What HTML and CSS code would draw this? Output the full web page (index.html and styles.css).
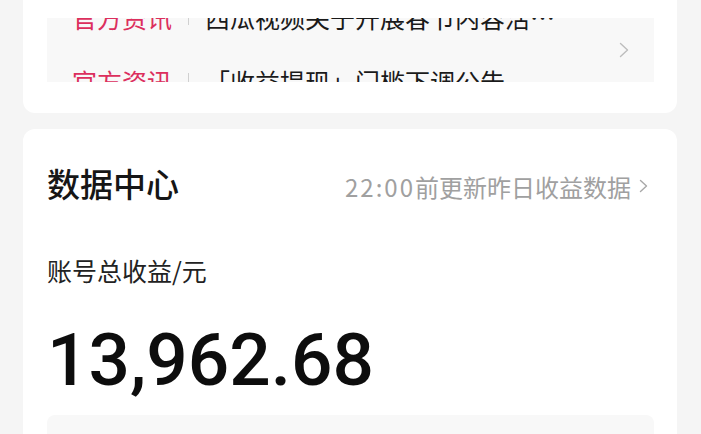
FILE: index.html
```html
<!DOCTYPE html>
<html lang="zh-CN">
<head>
    <meta charset="UTF-8">
    <meta name="viewport" content="width=device-width, initial-scale=1.0">
    <title>创作者中心</title>
    <link rel="stylesheet" href="styles.css">
</head>
<body>
    <div class="card notice-card">
        <div class="ticker">
            <div class="ticker-window">
                <ul class="ticker-list">
                    <li class="ticker-row">
                        <span class="tag">官方资讯</span>
                        <span class="sep"></span>
                        <span class="headline">西瓜视频关于开展春节内容活动的通知</span>
                    </li>
                    <li class="ticker-row">
                        <span class="tag">官方资讯</span>
                        <span class="sep"></span>
                        <span class="headline">「收益提现」门槛下调公告</span>
                    </li>
                </ul>
            </div>
            <svg class="chevron" width="10" height="16" viewBox="0 0 10 16">
                <polyline points="1.5,1.5 8.5,8 1.5,14.5" fill="none" stroke="#bdbdbd" stroke-width="1.4" stroke-linecap="round" stroke-linejoin="round"/>
            </svg>
        </div>
    </div>

    <div class="card data-card">
        <div class="data-head">
            <h2 class="data-title">数据中心</h2>
            <a class="data-update" href="#">
                <span><span class="time">22:00</span>前更新昨日收益数据</span>
                <svg width="9" height="14" viewBox="0 0 9 14">
                    <polyline points="1.5,1.5 7.5,7 1.5,12.5" fill="none" stroke="#a8a8a8" stroke-width="1.4" stroke-linecap="round" stroke-linejoin="round"/>
                </svg>
            </a>
        </div>
        <p class="total-label">账号总收益/元</p>
        <p class="total-value">13,962.68</p>
        <div class="data-panel"></div>
    </div>
</body>
</html>
```

FILE: styles.css
```css
body {
    margin: 0;
    padding: 0 24px 0 23px;
    background-color: #f5f5f5;
    font-family: "Noto Sans CJK SC", "Noto Sans", sans-serif;
    color: #161616;
}
.card {
    background-color: #ffffff;
    border-radius: 12px;
}
.notice-card {
    border-radius: 0 0 12px 12px;
    padding: 18px 23px 31px 24px;
}
.ticker {
    display: flex;
    align-items: center;
    height: 64px;
    background-color: #f8f8f8;
}
.ticker-window {
    flex: 1;
    height: 64px;
    overflow: hidden;
}
.ticker-list {
    list-style: none;
    margin: -33px 0 0 0;
    padding: 0 0 0 25px;
}
.ticker-row {
    display: flex;
    align-items: center;
    height: 64px;
    font-size: 25px;
    line-height: 30px;
    white-space: nowrap;
}
.tag {
    color: #dc2f5d;
}
.sep {
    width: 1px;
    height: 16px;
    margin: 0 16px;
    background-color: #d0d0d0;
}
.headline {
    max-width: 352px;
    overflow: hidden;
    text-overflow: ellipsis;
    color: #1a1a1a;
}
.chevron {
    margin-right: 25px;
}
.data-card {
    margin-top: 16px;
    padding: 30px 23px 0 24px;
}
.data-head {
    display: flex;
    justify-content: space-between;
    align-items: center;
    height: 48px;
}
.data-title {
    margin: 0;
    font-size: 33px;
    font-weight: 500;
    line-height: 48px;
}
.data-update {
    display: flex;
    align-items: center;
    gap: 8px;
    margin: 6px 6px 0 0;
    color: #a0a0a0;
    font-size: 24px;
    text-decoration: none;
}
.time {
    letter-spacing: 2px;
}
.total-label {
    margin: 47px 0 0 0;
    font-size: 25px;
    line-height: 32px;
    color: #222222;
}
.total-value {
    margin: 34px 0 0 0;
    font-family: Roboto, "Liberation Sans", sans-serif;
    font-size: 73px;
    font-weight: 500;
    line-height: 80px;
    color: #0d0d0d;
}
.data-panel {
    margin-top: 15px;
    height: 100px;
    border-radius: 8px;
    background-color: #f8f8f8;
}
```
